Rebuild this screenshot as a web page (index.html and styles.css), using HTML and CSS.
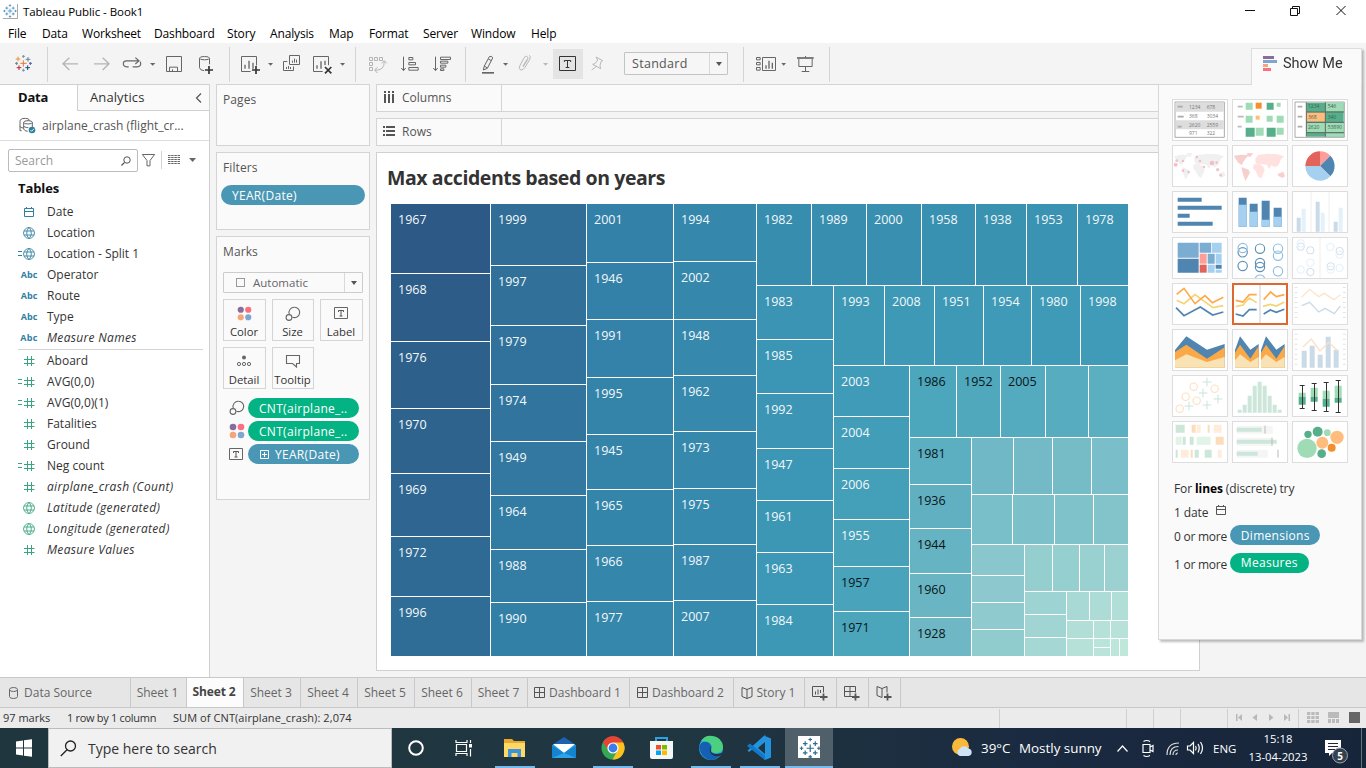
FILE: index.html
```html
<!DOCTYPE html>
<html lang="en">
<head>
<meta charset="utf-8">
<title>Tableau Public - Book1</title>
<link rel="stylesheet" href="styles.css">
</head>
<body>
<svg class="defs" width="0" height="0">
  <symbol id="cal" viewBox="0 0 12 12"><path d="M1.500 2.500h9v8h-9zM1.500 5.500h9M3.500 1v2M8.500 1v2" fill="none" stroke="currentColor"/></symbol>
  <symbol id="globe" viewBox="0 0 12 12"><path d="M6 .6a5.400 5.400 0 1 0 .01 0zM1 4h10M1 8h10M6 .6c-3 3-3 8 0 10.800M6 .6c3 3 3 8 0 10.800" fill="none" stroke="currentColor" stroke-width=".9"/></symbol>
  <symbol id="hash" viewBox="0 0 12 12"><path d="M4.500 1v10M8.500 1v10M1 4.500h10.500M1 8.500h10.500" fill="none" stroke="currentColor"/></symbol>
  <symbol id="size" viewBox="0 0 16 16"><path d="M9.500 1.200a5.200 5.200 0 1 1-2 10" fill="none" stroke="#666" stroke-width="1.100"/><path d="M9.500 1.200a5.200 5.200 0 0 0-5.200 6.800" fill="none" stroke="#666" stroke-width="1.100"/><circle cx="4" cy="11.500" r="2.900" fill="none" stroke="#666" stroke-width="1.100"/></symbol>
  <symbol id="dots" viewBox="0 0 16 16"><circle cx="4" cy="4" r="3.300" fill="#8a6d9b"/><circle cx="12" cy="4" r="3.300" fill="#fb6f80"/><circle cx="4" cy="12" r="3.300" fill="#f4a57a"/><circle cx="12" cy="12" r="3.300" fill="#7fa6d0"/></symbol>
  <symbol id="tee" viewBox="0 0 14 14"><path d="M.5 1.500h13v11h-13z" fill="none" stroke="#666"/><path d="M4.500 6v-1.500h5v1.500M7 4.500v5.500M5.500 10h3" fill="none" stroke="#555"/></symbol>
  <symbol id="spark" viewBox="0 0 48 48"><path d="M24 16v16M16 24h16M13 9v10M8 14h10M35 9v10M30 14h10M13 29v10M8 34h10M35 29v10M30 34h10M24 1v8M20 5h8M24 39v8M20 43h8M5 20v8M1 24h8M43 20v8M39 24h8" fill="none" stroke="currentColor" stroke-width="2.600"/></symbol>
</svg>

<header class="titlebar">
  <svg class="app-icon" width="15" height="15" viewBox="0 0 48 48"><use href="#spark"/></svg>
  <span class="app-title">Tableau Public - Book1</span>
  <svg class="winbtns" width="108" height="21" viewBox="0 0 108 21" fill="none" stroke="#111"><path d="M4 9.500h10M49.500 7.500h7v7h-7zM51.500 7.500v-2h7v7h-2M95.500 5l9 9M104.500 5l-9 9"/></svg>
</header>
<nav class="menu">
  <span style="width:34px">File</span><span style="width:40px">Data</span><span style="width:72px">Worksheet</span><span style="width:73px">Dashboard</span><span style="width:43px">Story</span><span style="width:59px">Analysis</span><span style="width:40px">Map</span><span style="width:54px">Format</span><span style="width:48px">Server</span><span style="width:60px">Window</span><span>Help</span>
</nav>

<div class="toolbar">
  <svg width="160" height="41" viewBox="0 129 480 123" fill="none" stroke="#666" stroke-width="3">
    <g stroke-width="3"><path d="M70 181v19M61 190h19" stroke="#e8762d"/><path d="M54 170v14M47 177h14" stroke="#eb912c"/><path d="M84 171v14M77 178h14" stroke="#59879b"/><path d="M57 196v14M50 203h14" stroke="#c72035"/><path d="M83 196v14M76 203h14" stroke="#1f457e"/><path d="M70 165v9M66 169h9" stroke="#7199a6"/><path d="M70 206v9M66 211h9" stroke="#7199a6"/><path d="M45 190h9M50 186v9" stroke="#5b879b"/><path d="M87 190h9M91 186v9" stroke="#5b6591"/></g>
    <path d="M142.500 141v105" stroke="#d4d4d4"/>
    <path d="M234 191.500h-44M208 173l-19 18.500 19 18.500M282 191.500h44M308 173l19 18.500-19 18.500" stroke="#b4b4b4" stroke-width="4"/>
    <path d="M386 200.500h-6q-10-1-10-9.500 0-8.500 10-8.500h36M398 200.500h14q10-1 10-9.500 0-4-2-6M406 173l11 9.500-11 9.500" stroke-width="3.500"/>
    <path d="M450 189h16l-8 8z" fill="#666" stroke="none"/>
  </svg>
  <svg width="197" height="41" viewBox="480 129 591 123" fill="none" stroke="#666" stroke-width="3">
    <path d="M499.500 169.500h45v45h-45zM508.500 214v-12.500h24v12.500M517.500 214v-6"/>
    <path d="M598.500 175v28q1 8 14 9M628.500 175v18"/><ellipse cx="613.500" cy="174.500" rx="15" ry="5"/><path d="M627 198v24M615 210h24" stroke="#333" stroke-width="5"/>
    <path d="M688.500 141v105M1066.500 141v105" stroke="#d4d4d4"/>
    <path d="M752 214.500h-27.500v-45h45v27"/><path d="M735 206v-12M747 206v-24M759 206v-18" stroke-width="4"/><path d="M768 198v24M756 210h24" stroke="#333" stroke-width="5"/>
    <path d="M804 189h15l-7 8zM1020 189h15l-7 8z" fill="#666" stroke="none"/>
    <path d="M868.500 166.500h30v27h-30zM862 184.500h-11.500v27h30v-12"/><path d="M877.500 188v-6M883.500 188v-12M889.500 188v-9M859.500 207v-6M865.500 207v-9M871.500 207v-6"/>
    <path d="M968 214.500h-27.500v-45h45v26"/><path d="M951 206v-10M963 206v-22M975 195v-13" stroke-width="4"/><path d="M975 201l19 19M994 201l-19 19" stroke="#333" stroke-width="5"/>
  </svg>
  <svg width="112" height="41" viewBox="1071 129 336 123" fill="none" stroke="#666" stroke-width="3">
    <g stroke="#b4b4b4"><path d="M1108.500 172.500h9v9h-9zM1123.500 172.500h9v9h-9zM1138.500 172.500h9v9h-9zM1108.500 187.500h9v9h-9zM1108.500 202.500h9v9h-9zM1125 210.500q28 2 28-26M1132 202l-8 8 8 9M1145 190l8-8 7 8"/></g>
    <path d="M1210.500 170v41M1204 204l6.500 8 6.500-8M1226.500 172.500h12v7h-12zM1226.500 187.500h20v7h-20zM1226.500 202.500h28v8h-28z"/>
    <path d="M1306.500 170v41M1300 204l6.500 8 6.500-8M1321.500 171.500h30v7h-30zM1321.500 183.500h22v6h-22zM1321.500 195.500h16v6h-16zM1321.500 206.500h10v5h-10z"/>
    <path d="M1396.500 141v105" stroke="#d4d4d4"/>
  </svg>
  <svg width="84" height="41" viewBox="147 9 252 123" fill="none" stroke="#666" stroke-width="3">
    <path d="M193 78l15-28q8-4 10 4l-16 31-12 5zM193 78l9 6M205 57l9 5"/><path d="M186 98.500h36" stroke-width="5"/><path d="M249 69h15l-7 8z" fill="#666" stroke="none"/>
    <path d="M309 81l14-22q3-9-3-10-5-1-8 5l-12 22q-5 12 3 14 6 1 12-8l14-23q5-12-2-13M321 58l-12 20" stroke="#b8b8b8"/><path d="M369 69h15l-7 8z" fill="#b8b8b8" stroke="none"/>
  </svg>
  <span class="tool-active"><svg width="30" height="30" viewBox="399 27 90 90" fill="none" stroke="#333" stroke-width="3"><path d="M418.500 49.500h48v42h-48z"/><path d="M433 66v-4.500h19v4.500M442.500 61v22M437 82.500h11"/></svg></span>
  <svg width="41" height="41" viewBox="489 9 123 123" fill="none" stroke="#b8b8b8" stroke-width="3"><path d="M528 51l20 11-5 3-3 12 2 9-24-13 7-2 8-11zM529 79l-14 11"/></svg>
  <div class="select">Standard<i></i></div>
  <svg width="110" height="41" viewBox="924 9 330 123" fill="none" stroke="#666" stroke-width="3"><path d="M970.500 21v105M1228.500 21v105" stroke="#d4d4d4"/><path d="M1009.500 52.500h11v7h-11zM1009.500 67.500h11v7h-11zM1009.500 82.500h11v8h-11zM1027.500 52.500h39v39h-39z"/><path d="M1038 86v-10M1047 86v-24M1057 86v-18" stroke-width="4"/><path d="M1084 69h14l-7 8z" fill="#666" stroke="none"/><path d="M1131 54h50" stroke-width="5"/><path d="M1136.500 57v22.500h40v-22.500M1156.500 48v4M1156.500 80v15M1145 94.500h23"/></svg>
</div>

<main class="workspace">
  <aside class="pane">
    <div class="pane-tabs"><b class="tab-data">Data</b><span class="tab-an">Analytics<svg width="7" height="10" viewBox="0 0 7 10"><path d="M6 .5l-4.500 4.500 4.500 4.500" fill="none" stroke="#555" stroke-width="1.200"/></svg></span></div>
    <div class="ds"><svg width="18" height="18" viewBox="58 97 54 54" fill="none" stroke="#666" stroke-width="3"><path d="M66 138h-5v-31M70 130q-9-1-9-5M61 107q5-7 16-6 12 0 12 6"/><ellipse cx="85" cy="113" rx="13" ry="5"/><path d="M72 113v20q2 6 12 7M98 113v14M72 125q8 5 14 4"/><circle cx="97" cy="136" r="10" fill="#31809f" stroke="none"/><path d="M92 136l4 4 7-8" stroke="#fff" stroke-width="2.500"/></svg><span>airplane_crash (flight_cr...</span></div>
    <div class="search-row">
      <div class="search"><span>Search</span><svg width="10" height="10" viewBox="0 0 10 10" fill="none" stroke="#555"><circle cx="6" cy="4" r="3.200"/><path d="M3.600 6.400L.5 9.500" stroke-width="1.300"/></svg></div>
      <svg width="61" height="22" viewBox="414 195 183 66" fill="none" stroke="#666" stroke-width="3"><path d="M427 211.500h37l-14 18v16h-9v-16z"/><path d="M484.500 201v54" stroke="#d4d4d4"/><path d="M504 214.500h36M504 220.500h36M504 226.500h36M504 232.500h36M504 238.500h36" stroke-dasharray="7.500 2"/><path d="M567 222h21l-10 12z" fill="#666" stroke="none"/></svg>
    </div>
    <h2 class="tables">Tables</h2>
    <ul class="fields dim">
      <li><i><svg><use href="#cal"/></svg></i>Date</li>
      <li><i><svg><use href="#globe"/></svg></i>Location</li>
      <li><i class="calc"><svg><use href="#globe"/></svg></i>Location - Split 1</li>
      <li><i class="abc">Abc</i>Operator</li>
      <li><i class="abc">Abc</i>Route</li>
      <li><i class="abc">Abc</i>Type</li>
      <li class="it"><i class="abc">Abc</i>Measure Names</li>
    </ul>
    <ul class="fields mea">
      <li><i><svg><use href="#hash"/></svg></i>Aboard</li>
      <li><i class="calc"><svg><use href="#hash"/></svg></i>AVG(0,0)</li>
      <li><i class="calc"><svg><use href="#hash"/></svg></i>AVG(0,0)(1)</li>
      <li><i><svg><use href="#hash"/></svg></i>Fatalities</li>
      <li><i><svg><use href="#hash"/></svg></i>Ground</li>
      <li><i class="calc"><svg><use href="#hash"/></svg></i>Neg count</li>
      <li class="it"><i><svg><use href="#hash"/></svg></i>airplane_crash (Count)</li>
      <li class="it"><i><svg><use href="#globe"/></svg></i>Latitude (generated)</li>
      <li class="it"><i><svg><use href="#globe"/></svg></i>Longitude (generated)</li>
      <li class="it"><i><svg><use href="#hash"/></svg></i>Measure Values</li>
    </ul>
  </aside>

  <section class="cards">
    <div class="card pages"><h3>Pages</h3></div>
    <div class="card filters"><h3>Filters</h3><span class="pill blue wide">YEAR(Date)</span></div>
    <div class="card marks"><h3>Marks</h3>
      <div class="marktype"><em></em>Automatic<i></i></div>
      <div class="btns">
        <div><svg width="15" height="15" viewBox="0 0 16 16"><use href="#dots"/></svg>Color</div>
        <div><svg width="16" height="16"><use href="#size"/></svg>Size</div>
        <div><svg width="14" height="14"><use href="#tee"/></svg>Label</div>
        <div><svg width="16" height="14" viewBox="0 0 16 14"><circle cx="8" cy="3.500" r="2" fill="#666"/><g fill="none" stroke="#666"><circle cx="3" cy="10" r="1.600"/><circle cx="8" cy="10" r="1.600"/><circle cx="13" cy="10" r="1.600"/></g></svg>Detail</div>
        <div><svg width="16" height="14" viewBox="0 0 16 14"><path d="M1.500 1.500h13v8h-3v3.500l-4-3.500h-6z" fill="none" stroke="#666" stroke-width="1.100"/></svg>Tooltip</div>
      </div>
      <div class="enc"><svg width="16" height="16"><use href="#size"/></svg><span class="pill green">CNT(airplane_..</span></div>
      <div class="enc"><svg width="16" height="16"><use href="#dots"/></svg><span class="pill green">CNT(airplane_..</span></div>
      <div class="enc"><svg width="14" height="14"><use href="#tee"/></svg><span class="pill blue"><svg width="9" height="9" viewBox="0 0 9 9"><path d="M.5 .5h8v8h-8zM4.500 2v5M2 4.500h5" fill="none" stroke="#fff"/></svg>YEAR(Date)</span></div>
    </div>
  </section>

  <section class="view-col">
    <div class="shelf"><span><svg width="12" height="12" viewBox="0 0 12 12" fill="#555"><path d="M1 0h2v2h-2zM5 0h2v2h-2zM9 0h2v2h-2zM1 3h2v9h-2zM5 3h2v9h-2zM9 3h2v9h-2z"/></svg>Columns</span></div>
    <div class="shelf"><span><svg width="12" height="10" viewBox="0 0 12 10" fill="#555"><path d="M0 0h2v2h-2zM0 4h2v2h-2zM0 8h2v2h-2zM3 0h9v2h-9zM3 4h9v2h-9zM3 8h9v2h-9z"/></svg>Rows</span></div>
    <div class="view"><h1>Max accidents based on years</h1><svg id="treemap" width="738" height="453" viewBox="391 204 738 453"></svg></div>
  </section>

  <aside class="showme">
    <div class="sm-tab"><svg width="15" height="16" viewBox="0 0 15 16"><path d="M0 0h11v3h-11z" fill="#8a6d9b"/><path d="M0 4h14v3h-14z" fill="#7fa6d0"/><path d="M0 8h5v3h-5z" fill="#f4a57a"/><path d="M0 12h8v3h-8z" fill="#fb6f80"/></svg>Show Me</div>
    <div class="sm-body">
    <div class="grid">
      <svg viewBox="0 0 168 126"><path d="M9 9h148v106h-148z" fill="#fff" stroke="#aaa" stroke-width="3"/><path d="M11 11h144v27h-144zM11 64h144v27h-144z" fill="#ddd"/><path d="M17 23h15M17 53h18M17 83h12" stroke="#aaa" stroke-width="5"/><g class="tiny"><text x="51" y="29">1234</text><text x="104" y="29">678</text><text x="51" y="57">368</text><text x="104" y="57">3034</text><text x="51" y="84">2620</text><text x="104" y="84">2559</text><text x="51" y="108">971</text><text x="104" y="108">322</text></g></svg>
      <svg viewBox="0 0 168 126"><path d="M17 23h15M17 53h18M17 83h12" stroke="#bbb" stroke-width="5"/><path d="M41 11h21v21h-21zM134 11h12v12h-12zM41 50h21v21h-21zM104 50h18v18h-18zM134 50h21v21h-21zM71 86h24v24h-24zM134 86h21v21h-21z" fill="#9fdbb5"/><path d="M104 11h21v21h-21zM41 86h27v27h-27zM104 86h27v27h-27z" fill="#57ae8a"/><path d="M71 11h18v18h-18z" fill="#f78f2e"/><path d="M71 50h12v12h-12z" fill="#ffbd7d"/></svg>
      <svg viewBox="0 0 168 126"><path d="M9 9h148v106h-148z" fill="#fff" stroke="#aaa" stroke-width="3"/><path d="M44 11h111v102h-111z" fill="#57ae8a"/><path d="M101 11h54v26h-54zM44 72h111v28h-111zM101 103h54v10h-54z" fill="#9fdbb5"/><path d="M44 40h56v28h-56z" fill="#ffbd7d"/><path d="M43 10v103M100 10v103M43 39h113M43 70h113M43 101h113" stroke="#666" stroke-width="3"/><path d="M17 23h14M17 53h14M17 83h14" stroke="#aaa" stroke-width="5"/><g class="tiny deep"><text x="48" y="28">1234</text><text x="107" y="28">546</text><text x="48" y="59">368</text><text x="107" y="59">340</text><text x="48" y="89">2620</text><text x="107" y="89">53890</text></g></svg>

      <svg viewBox="0 0 168 126"><path d="M6 34l20-5 24 1-8 10-9 12-3 9-11-8-10-14zM44 25l18-1-7 12-8-2zM31 66l18 8 4 9-12 21-9-22zM66 40l10-10 30-4 30 2 20 6-10 9-8 18-10 6-10-6-8 10-7-12-13-1-12-1-8-2zM65 58l18 0 12 8 3 10-10 22-9-4-8-16-8-8zM142 84l14-4 4 12-10 6-8-6z" fill="#f0f0f0"/><g fill="#efb0b8" opacity=".75"><circle cx="11" cy="59" r="6"/><circle cx="14" cy="47" r="4"/><circle cx="33" cy="77" r="4"/><circle cx="74" cy="36" r="4"/><circle cx="84" cy="48" r="4"/><circle cx="96" cy="66" r="4"/><circle cx="120" cy="54" r="7"/><circle cx="134" cy="53" r="4"/><circle cx="137" cy="74" r="5"/><circle cx="146" cy="91" r="4"/><circle cx="50" cy="81" r="4"/><circle cx="33" cy="48" r="4"/></g></svg>
      <svg viewBox="0 0 168 126"><path d="M6 32l20-3 24 1-8 10-9 12-3 9-11-8-10-14zM44 25l20-1-9 12-8-2zM28 66l22 8 4 9-14 25-8-24z" fill="#f7d0ce"/><path d="M70 42l8-12 28-4 30 2 20 6-9 9-8 18-10 6-10-6-8 10-7-12-13-1-12-1-8-2zM65 58l18 0 12 8 3 10-10 24-9-4-8-18-8-8z" fill="#ffe1e0"/><path d="M138 86l16-6 5 14-8 5-13-7z" fill="#f9cfcd"/></svg>
      <svg viewBox="0 0 168 126"><path d="M84 63v-44a44 44 0 0 1 31 13z" fill="#ff9d98"/><path d="M84 63l31-31a44 44 0 0 1 0 62z" fill="#4f85b0"/><path d="M84 63l31 31a44 44 0 0 1-75-31z" fill="#a6d0f0"/><path d="M84 63h-44a44 44 0 0 1 44-44z" fill="#e16359"/></svg>

      <svg viewBox="0 0 168 126"><path d="M17 20h72v12h-72zM17 44h132v12h-132zM17 68h36v12h-36zM17 92h105v12h-105z" fill="#4f85b0"/></svg>
      <svg viewBox="0 0 168 126"><path d="M20 20h24v87h-24zM53 38h24v69h-24zM89 29h24v78h-24zM125 50h24v57h-24z" fill="#4f85b0"/><path d="M20 41h24v66h-24zM53 62h24v45h-24zM89 86h24v21h-24zM125 77h24v30h-24z" fill="#a6d0f0"/></svg>
      <svg viewBox="0 0 168 126"><path d="M57 2v122M111 2v122" stroke="#eee" stroke-width="3"/><path d="M14 80h12v42h-12zM71 32h12v90h-12zM125 92h12v30h-12z" fill="#cbdae7"/><path d="M29 53h12v69h-12zM86 65h12v57h-12zM140 50h12v72h-12z" fill="#e3f1fb"/></svg>

      <svg viewBox="0 0 168 126"><path d="M17 17h63v45h-63zM83 17h34v30h-34zM107 50h21v30h-21z" fill="#7badd3"/><path d="M17 65h63v42h-63zM131 83h18v12h-18z" fill="#4f85b0"/><path d="M119 17h30v30h-30zM131 50h18v30h-18zM107 83h21v24h-21zM131 98h18v9h-18z" fill="#a6d0f0"/><path d="M83 50h21v30h-21z" fill="#ff9d98"/><path d="M83 83h21v24h-21z" fill="#e16359"/></svg>
      <svg viewBox="0 0 168 126" fill="none" stroke="#5e92b8" stroke-width="3.500"><circle cx="32" cy="46" r="14"/><circle cx="32" cy="87" r="14"/><circle cx="84" cy="35" r="14"/><circle cx="84" cy="78" r="14"/><circle cx="84" cy="90" r="14"/><g stroke="#8fbfe2"><circle cx="32" cy="33" r="14"/><circle cx="138" cy="35" r="14"/><circle cx="138" cy="56" r="14"/><circle cx="138" cy="103" r="14"/><path d="M70 124q3-10 14-10t14 10"/></g></svg>
      <svg viewBox="0 0 168 126" fill="none" stroke="#d0deea" stroke-width="3"><path d="M84 3v120" stroke="#eee"/><circle cx="26" cy="29" r="11"/><circle cx="55" cy="40" r="11"/><circle cx="143" cy="42" r="11"/><circle cx="55" cy="105" r="11"/><circle cx="116" cy="88" r="11"/><g stroke="#e3f1fb"><circle cx="26" cy="19" r="11"/><circle cx="115" cy="30" r="11"/><circle cx="143" cy="53" r="11"/><circle cx="55" cy="77" r="11"/><circle cx="26" cy="98" r="11"/><circle cx="143" cy="93" r="11"/><circle cx="116" cy="98" r="11"/></g></svg>

      <svg viewBox="0 0 168 126" fill="none" stroke-width="5"><path d="M14 52l22 10 33-27 54 39 31-6" stroke="#f5d378"/><path d="M14 34l22-18 33 46 30-24 22 21 33-16" stroke="#ffa94b"/><path d="M12 74l24 24 49-26 37 24 32-9" stroke="#4f85b0"/></svg>
      <svg class="sel" viewBox="0 0 168 126" fill="none" stroke-width="5"><path d="M84 3v120" stroke="#ccc" stroke-width="3"/><path d="M11 52l22 5 19-22h22M95 50l21-23 17 14 24-6" stroke="#ffa94b"/><path d="M11 71l22-5 19-21 22 14M93 70l22-6 18 5 24-12" stroke="#f5d378"/><path d="M11 93l22 6 19-19h22M95 93l20-12 18 7 24-9" stroke="#4f85b0"/></svg>
      <svg viewBox="0 0 168 126" fill="none" stroke-width="4"><path d="M29 43l24-24 27 22 17-10 29 19 19-15" stroke="#fde3cb"/><path d="M29 68l24-10 27 29 19-11 28 16 18-23" stroke="#cbdae7"/><path d="M12 12v100M157 12v100" stroke="#e4e4e4" stroke-width="9" stroke-dasharray="3 12"/></svg>

      <svg viewBox="0 0 168 126"><path d="M9 116v-53l34-41 62 40 53-17v71z" fill="#4f85b0"/><path d="M9 116v-47l34-22 62 42 53-34v61z" fill="#fba947"/><path d="M9 116v-22l34-18 62 23 53-15v32z" fill="#f9e2b3"/></svg>
      <svg viewBox="0 0 168 126"><path d="M9 116v-53l15-41 31 40 25-17v71zM87 116v-53l15-41 31 40 25-17v71z" fill="#4f85b0"/><path d="M9 116v-45l15-24 31 42 25-38v65zM87 116v-45l15-24 31 42 25-38v65z" fill="#fba947"/><path d="M9 116v-22l15-18 31 23 25-15v32zM87 116v-22l15-18 31 23 25-15v32z" fill="#f9e2b3"/></svg>
      <svg viewBox="0 0 168 126" fill="none"><path d="M29 65h15v51h-15zM53 50h15v66h-15zM77 77h15v39h-15zM101 23h15v93h-15zM125 62h15v54h-15z" fill="#cbdae7"/><path d="M33 54l25-24 26 36 26-26 27 25" stroke="#fde0c6" stroke-width="4"/><path d="M12 14v100M157 14v100" stroke="#e4e4e4" stroke-width="9" stroke-dasharray="3 12"/></svg>

      <svg viewBox="0 0 168 126" fill="none" stroke="#fee0c3" stroke-width="3.500"><circle cx="65" cy="35" r="11"/><circle cx="128" cy="41" r="11"/><circle cx="41" cy="65" r="11"/><circle cx="74" cy="77" r="11"/><circle cx="23" cy="101" r="11"/><path d="M92 21h26M105 8v26M80 54h26M93 41v26M125 72h26M138 59v26M92 90h26M105 77v26M38 93h26M51 80v26" stroke="#c9e5d9" stroke-width="3"/></svg>
      <svg viewBox="0 0 168 126"><path d="M17 104h12v9h-12zM32 89h12v24h-12zM47 62h12v51h-12zM62 32h12v81h-12zM77 20h12v93h-12zM92 32h12v81h-12zM107 62h12v51h-12zM122 89h12v24h-12zM137 104h12v9h-12z" fill="#cce6da"/></svg>
      <svg viewBox="0 0 168 126"><path d="M20 53h21v12h-21zM56 38h21v27h-21zM92 47h21v24h-21zM128 32h21v36h-21z" fill="#9fdbb5"/><path d="M20 65h21v24h-21zM56 65h21v15h-21zM92 71h21v24h-21zM128 68h21v15h-21z" fill="#57ae8a"/><path d="M23 31.500h15M31.500 30v70M23 100.500h15M59 25.500h15M67.500 24v81M59 106.500h15M95 22.500h15M103.500 21v87M95 109.500h15M131 16.500h15M139.500 15v96M131 112.500h15" fill="none" stroke="#333" stroke-width="3"/></svg>

      <svg viewBox="0 0 168 126"><path d="M11 11h27v24h-27zM32 47h9v24h-9zM53 47h12v24h-12zM11 86h6v24h-6zM68 86h12v24h-12zM98 86h21v24h-21z" fill="#cce6da"/><path d="M11 47h18v24h-18zM74 47h42v24h-42z" fill="#e2f3e8"/><path d="M59 11h12v24h-12zM107 11h6v24h-6zM131 47h24v24h-24zM56 86h6v24h-6z" fill="#fddcbc"/><path d="M74 11h12v24h-12zM125 11h24v24h-24zM26 86h24v24h-24zM137 86h12v24h-12z" fill="#ffecda"/></svg>
      <svg viewBox="0 0 168 126"><path d="M14 14h108v24h-108zM14 50h108v24h-108zM14 86h93v24h-93z" fill="#f5f5f5"/><path d="M14 20h75v12h-75zM14 56h120v12h-120zM14 92h63v12h-63z" fill="#cce6da"/><path d="M99 14v24M120 50v24M138 86v24" stroke="#bbb" stroke-width="3"/></svg>
      <svg viewBox="0 0 168 126"><circle cx="45" cy="82" r="29" fill="#9fdbb5"/><circle cx="106" cy="35" r="10" fill="#9fdbb5"/><circle cx="48" cy="40" r="11" fill="#57ae8a"/><circle cx="77" cy="32" r="15" fill="#57ae8a"/><circle cx="89" cy="98" r="13" fill="#57ae8a"/><circle cx="135" cy="49" r="20" fill="#ffbd7d"/><circle cx="91" cy="65" r="18" fill="#ffbd7d"/><circle cx="119" cy="80" r="12" fill="#f28e2b"/></svg>
    </div>
    <div class="hint"><p class="l1">For <b>lines</b> (discrete) try</p><p class="l2">1 date <svg width="12" height="12"><use href="#cal"/></svg></p><p class="l3">0 or more <span class="pill blue">Dimensions</span></p><p class="l4">1 or more <span class="pill green">Measures</span></p></div>
    </div>
  </aside>
</main>

<div class="sheets">
  <span class="src" style="width:131px"><svg width="9" height="12" viewBox="0 0 9 12" fill="none" stroke="#666"><path d="M.5 2.500q0-2 4-2t4 2v7q0 2-4 2t-4-2zM.5 2.500q0 2 4 2t4-2"/></svg>Data Source</span>
  <span style="width:56px">Sheet 1</span><span class="on" style="width:57px">Sheet 2</span><span style="width:57px">Sheet 3</span><span style="width:57px">Sheet 4</span><span style="width:57px">Sheet 5</span><span style="width:57px">Sheet 6</span><span style="width:56px">Sheet 7</span>
  <span style="width:102px"><svg width="11" height="11" viewBox="0 0 11 11"><path d="M.5 .5h10v10h-10zM5.500 .5v10M.5 5.500h10" fill="none" stroke="#555"/></svg>Dashboard 1</span>
  <span style="width:104px"><svg width="11" height="11" viewBox="0 0 11 11"><path d="M.5 .5h10v10h-10zM5.500 .5v10M.5 5.500h10" fill="none" stroke="#555"/></svg>Dashboard 2</span>
  <span style="width:71px"><svg width="12" height="12" viewBox="0 0 12 12"><path d="M6 2.500l-5-2v9l5 2 5-2v-9zM6 2.500v9" fill="none" stroke="#555"/></svg>Story 1</span>
  <span style="width:32px"><svg width="16" height="16" viewBox="0 0 16 16" fill="none" stroke="#555"><path d="M9 11.500h-8.500v-10h11v6M3.500 9.500v-3M6 9.500v-5M8.500 8v-3"/><path d="M11.500 8.500v7M8 12h7.500" stroke-width="1.800"/></svg></span>
  <span style="width:32px"><svg width="16" height="16" viewBox="0 0 16 16" fill="none" stroke="#555"><path d="M8 11.500h-7.500v-10h11v6M6 1.500v10M.5 6.500h11"/><path d="M11.500 8.500v7M8 12h7.500" stroke-width="1.800"/></svg></span>
  <span style="width:32px"><svg width="16" height="16" viewBox="0 0 16 16" fill="none" stroke="#555"><path d="M6 3.500l-5-2v9l5 2v-9l5-2v6"/><path d="M11.500 8.500v7M8 12h7.500" stroke-width="1.800"/></svg></span>
</div>
<div class="status">
  <span class="s1">97 marks</span><span class="s2">1 row by 1 column</span><span class="s3">SUM of CNT(airplane_crash): 2,074</span>
  <svg width="367" height="19" viewBox="999 709 367 19"><path d="M999.500 709v19M1126.500 709v19M1153.500 709v19M1180.500 709v19M1227.500 709v19M1298.500 709v19" stroke="#cfcfcf"/><path d="M1236 714h1.500v7h-1.500zM1242 714v7l-4-3.500zM1257 714v7l-4.500-3.500zM1269 714v7l4.500-3.500zM1284 714v7l4-3.500zM1288.500 714h1.500v7h-1.500z" fill="#b8b8b8"/><path d="M1307 713.500h12M1307 717.500h12M1307 721.500h12" stroke="#bbb" stroke-width="3" stroke-dasharray="3.300 1"/><path d="M1328 712h11v6h-11zM1328 719h3v4h-3zM1332 719h3v4h-3zM1336 719h3v4h-3z" fill="#bbb"/><path d="M1349 712h11v11h-11z" fill="#666"/></svg>
</div>

<footer class="taskbar">
  <svg width="48" height="40" viewBox="0 728 48 40"><path d="M16 741.500l7-1v7h-7zM24 740.300l8-1.100v8.300h-8zM16 748.500h7v7l-7-1zM24 748.500h8v8.300l-8-1.100z" fill="#fff"/></svg>
  <div class="tb-search"><svg width="17" height="17" viewBox="0 0 17 17" fill="none" stroke="#222" stroke-width="1.300"><circle cx="10.500" cy="6" r="5"/><path d="M7 9.800L.8 16"/></svg>Type here to search</div>
  <svg width="393" height="40" viewBox="392 728 393 40">
    <circle cx="416" cy="748" r="6.800" fill="none" stroke="#fff" stroke-width="2"/>
    <path d="M456 740v2.500h11v-2.500M456.500 744.500h10v7h-10zM456 756v-2.500h11v2.500M470.500 740v3M470.500 749v7.500" fill="none" stroke="#fff" stroke-width="1.200"/><path d="M469 744h3v3.500h-3z" fill="#fff"/>
    <path d="M495 766h40v2h-40zM593 766h40v2h-40zM691 766h40v2h-40zM740 766h40v2h-40z" fill="#76b9ed"/>
    <path d="M504 739h8l2 2h11v16h-21z" fill="#e8a92d"/><path d="M504 743h21v14h-21z" fill="#ffd866"/><path d="M508 757v-8h13v8h-3.500v-4h-6v4z" fill="#3d93dc"/>
    <path d="M552 745l12-8 12 8v13h-24z" fill="#1d62b0"/><path d="M552 745h24v13h-24z" fill="#2ba4e8"/><path d="M553 744h22l-11 9z" fill="#fff"/><path d="M552 745l12 8-12 5zM576 745l-12 8 12 5z" fill="#1583cf"/>
    <circle cx="613" cy="748" r="11.500" fill="#34a853"/><path d="M603 742a11.500 11.500 0 0 1 20 0l1.500 6h-11.500l-5 2z" fill="#ea4335"/><path d="M613 742.500h10.200a11.500 11.500 0 0 1-10.700 17l5-9z" fill="#fbc11c"/><circle cx="613" cy="748" r="5.600" fill="#fff"/><circle cx="613" cy="748" r="4.400" fill="#3b7ded"/>
    <path d="M656 742v-4h11v4" fill="none" stroke="#2aa2e6" stroke-width="2"/><path d="M650 741h23v16q0 2-2 2h-19q-2 0-2-2z" fill="#f4f6f8"/><path d="M656 745h5v4.500h-5z" fill="#f25022"/><path d="M662 745h5v4.500h-5z" fill="#7fba00"/><path d="M656 750.500h5v4.500h-5z" fill="#00a4ef"/><path d="M662 750.500h5v4.500h-5z" fill="#ffb900"/>
    <circle cx="711" cy="748" r="12" fill="#2aa5e0"/><path d="M701 741q4-6 11-5 10 1 11 11 0 6-8 6-5-1-3-5 0-7-11-7z" fill="#4bd07f"/><path d="M699 747q2-6 8-5 4 1 4 5-4 8 9 8-4 5-9 5-10-1-12-13z" fill="#1560b3"/><path d="M711.500 746q-3 7 4.500 8 4 0 7-2l-3 4q-8 1-10-4-1-4 1.500-6z" fill="#20343f"/>
    <path d="M765 736l6 2.500v19l-6 2.500-12-11-4 3-1.500-1.500 18-16z" fill="#2493df"/><path d="M748 745l2-1.500 15 12v4.500l-18-14z" fill="#1478c8"/><path d="M765 742v12l-7-6z" fill="#20343f"/>
  </svg>
  <div class="tb-app"><svg width="22" height="22" viewBox="-3 -3 54 54"><use href="#spark"/></svg></div>
  <svg class="weather" width="22" height="22" viewBox="0 0 22 22"><circle cx="9.500" cy="9.500" r="8.500" fill="#fbb93b"/><path d="M9 19a4 4 0 0 1 0-7.500 5 5 0 0 1 8.500 0 3.800 3.800 0 0 1 0 7.500z" fill="#cfe3f7"/></svg>
  <span class="temp">39°C</span><span class="cond">Mostly sunny</span>
  <svg width="92" height="40" viewBox="1114 728 92 40" fill="none" stroke="#fff" stroke-width="1.200"><path d="M1117.500 751.500l5-5.500 5 5.500M1143 744.500h7v8h-7zM1150 747l3-1.500v6l-3-1.500M1143.500 741.500q3-2 6.500 0M1143.500 755.500q3 2 6.500 0"/><path d="M1167 755q0-12 12-12M1170 755q0-8.500 8.500-8.500M1173 755q0-5 5-5M1176 755q0-2 2-2" stroke="#ddd"/><path d="M1187.500 746h2.500l3.500-3.500v11l-3.500-3.500h-2.500zM1195.500 746q1.500 2 0 4.500M1198 744q2.500 4 0 8.500M1200.500 742q4 6 0 12"/></svg>
  <span class="eng">ENG</span>
  <div class="clock"><span>15:18</span><span>13-04-2023</span></div>
  <svg class="notif" width="46" height="40" viewBox="1320 728 46 40"><path d="M1325 740h16v13h-9l-3 3v-3h-4z" fill="#fff"/><path d="M1328 743.500h10M1328 746.500h10M1328 749.500h7" stroke="#1b2b3e"/><circle cx="1340" cy="755.500" r="7.500" fill="#35414d" stroke="#9aa3aa"/><text x="1340" y="759.500">5</text><path d="M1361.500 728v40" stroke="#66727e"/></svg>
</footer>
<script src="treemap.js"></script>
</body>
</html>
```
FILE: styles.css
```css
* { box-sizing: border-box; margin: 0; padding: 0; }
body { width: 1366px; height: 768px; overflow: hidden; display: flex; flex-direction: column; background: #f4f4f4; font-family: "Open Sans", sans-serif; font-size: 12px; color: #333; white-space: nowrap; }
svg { display: block; flex: none; }
.defs { position: absolute; }
ul { list-style: none; }
i, em { font-style: normal; }

.titlebar { height: 23px; flex: none; background: #fff; display: flex; align-items: center; padding-left: 3px; color: #000; }
.app-icon { color: #3b87b5; border-right: 1px solid #aaa; border-bottom: 1px solid #aaa; }
.app-title { margin-left: 5px; font-size: 11.500px; letter-spacing: -.05px; }
.winbtns { margin-left: auto; margin-right: 17px; }
.menu { height: 20px; flex: none; background: #fff; display: flex; align-items: center; padding-left: 8px; color: #000; font-size: 12px; letter-spacing: -.15px; }
.toolbar { height: 41px; flex: none; display: flex; }
.tool-active { width: 30px; height: 30px; margin-top: 6px; background: #e4e4e4; }
.select { width: 104px; height: 23px; margin-top: 9px; border: 1px solid #c3c3c3; border-radius: 1px; background: #f6f6f6; padding-left: 7px; line-height: 21px; font-size: 12.500px; letter-spacing: .3px; color: #555; display: flex; justify-content: space-between; }
.select i, .marktype i { width: 18px; border-left: 1px solid #d9d9d9; display: flex; align-items: center; justify-content: center; }
.select i::after, .marktype i::after { content: ""; border: 3.500px solid transparent; border-top: 4px solid #555; border-bottom: 0; }

.workspace { height: 593px; flex: none; display: flex; position: relative; }
.pane { width: 210px; height: 593px; background: #fff; border-right: 1px solid #d0d0d0; border-top: 1px solid #d0d0d0; }
.pane-tabs { display: flex; height: 26px; line-height: 25px; }
.tab-data { width: 77px; padding-left: 18px; font-size: 13px; letter-spacing: -.2px; color: #111; }
.tab-an { flex: 1; border-left: 1px solid #d0d0d0; border-bottom: 1px solid #d0d0d0; background: #fafafa; padding: 0 7px 0 12px; font-size: 13px; letter-spacing: .1px; display: flex; align-items: center; justify-content: space-between; }
.ds { height: 30px; border-bottom: 1px solid #ddd; display: flex; align-items: center; padding-left: 19px; gap: 5px; color: #555; }
.search-row { display: flex; padding: 8px 0 0 8px; height: 32px; }
.search { width: 130px; height: 23px; border: 1px solid #bbb; border-radius: 2px; display: flex; align-items: center; justify-content: space-between; padding: 0 6px; color: #999; }
.tables { font-size: 13px; line-height: 20px; height: 28px; padding: 5px 0 0 18px; letter-spacing: -.1px; color: #111; }
.fields li { height: 21px; line-height: 21px; display: flex; align-items: center; }
.fields i { width: 19px; height: 12px; margin: 0 10px 0 18px; display: flex; align-items: center; justify-content: flex-end; }
.fields i svg { width: 12px; height: 12px; margin-right: 2px; }
.fields i.calc::before { content: ""; width: 4px; height: 3px; border-top: 1px solid currentColor; border-bottom: 1px solid currentColor; margin-right: 1px; }
.fields i.abc { font: 700 9px "Open Sans", sans-serif; justify-content: center; padding-left: 3px; }
.dim { border-bottom: 1px solid #d4d4d4; height: 149px; margin: 0 6px 0 18px; }
.dim li { margin-left: -18px; }
.dim i { color: #31809f; }
.mea i { color: #38a580; }
.it { font-style: italic; letter-spacing: .32px; }

.cards { width: 154px; margin-left: 6px; display: flex; flex-direction: column; gap: 6px; }
.card { border: 1px solid #d4d4d4; background: #fafafa; }
.card h3 { font-weight: 400; font-size: 12px; line-height: 16px; padding: 7px 0 0 6px; color: #555; letter-spacing: .1px; }
.pages { height: 62px; } .filters { height: 78px; } .marks { height: 264px; }
.pill { height: 20px; line-height: 19px; border-radius: 10px; color: #fff; font-size: 12px; font-weight: 500; letter-spacing: .3px; padding-left: 11px; display: inline-flex; align-items: center; }
.blue { background: #4a97b5; } .green { background: #04b383; }
.wide { width: 144px; margin: 9px 0 0 4px; display: flex; }
.marktype { margin: 12px 0 0 6px; width: 140px; height: 21px; border: 1px solid #ccc; border-radius: 1px; display: flex; align-items: center; color: #666; font-size: 11.500px; }
.marktype em { width: 9px; height: 9px; border: 1px solid #999; margin: 0 8px 0 12px; }
.marktype i { margin-left: auto; height: 19px; }
.btns { display: grid; grid-template-columns: 43px 42px 43px; gap: 6px; padding: 6px 0 0 6px; }
.btns div { height: 42px; border: 1px solid #d4d4d4; display: flex; flex-direction: column; align-items: center; justify-content: space-between; padding: 6px 1px 1px 0; font-size: 11.300px; line-height: 15px; }
.enc { display: flex; align-items: center; margin: 3px 0 0 12px; height: 20px; }
.btns + .enc { margin-top: 9px; }
.enc svg { margin-right: auto; }
.enc .pill { width: 111px; margin-right: 10px; }
.enc .pill svg { margin: 0 6px 0 1px; }

.view-col { width: 824px; margin-left: 6px; display: flex; flex-direction: column; gap: 6px; }
.shelf { height: 28px; border: 1px solid #d4d4d4; background: #fafafa; display: flex; }
.shelf span { width: 125px; border-right: 1px solid #d4d4d4; display: flex; align-items: center; gap: 7px; padding: 0 0 2px 6px; color: #555; }
.view { height: 519px; background: #fff; border: 1px solid #d0d0d0; padding: 11px 0 0 14px; }
.view h1 { font-size: 19.500px; font-weight: 700; letter-spacing: -.42px; line-height: 28px; height: 40px; margin-left: -4px; color: #333; }
#treemap text { font-size: 12.500px; }

.showme { position: absolute; left: 1158px; top: -36px; width: 204px; filter: drop-shadow(2px 2px 1px rgba(0,0,0,.25)); }
.sm-tab { position: relative; width: 111px; height: 37px; margin-left: auto; background: #fafafa; border: 1px solid #ddd; border-bottom: 0; display: flex; align-items: center; padding: 0 0 7px 11px; gap: 5px; font: 14.500px Roboto, sans-serif; color: #333; z-index: 1; }
.sm-body { height: 556px; margin-top: -1px; background: #fafafa; border: 1px solid #d8d8d8; padding: 14px 0 0 13px; }
.grid { display: grid; grid-template-columns: repeat(3, 56px); gap: 4px; }
.grid svg { width: 56px; height: 42px; background: #fff; outline: 1px solid #ddd; outline-offset: -1px; }
.grid .sel { outline: 2px solid #dc6932; outline-offset: -2px; }
.tiny { font-size: 15px; fill: #777; }
.deep { fill: #3d6353; }
.hint { padding: 13px 0 0 2px; color: #333; letter-spacing: -.1px; }
.hint p { display: flex; align-items: center; white-space: pre; }
.hint b { color: #000; }
.l1, .l2 { height: 24px; } .l2 svg { margin: -5px 0 0 4px; color: #555; }
.l3 { height: 25px; letter-spacing: -.25px; } .l4 { height: 30px; letter-spacing: -.25px; }
.hint .pill { margin: -3px 0 0 0; width: 90px; letter-spacing: .3px; }
.hint .green { width: 79px; }

.sheets { height: 31px; flex: none; background: #e6e6e6; border-top: 1px solid #c8c8c8; border-bottom: 1px solid #c8c8c8; display: flex; color: #666; }
.sheets span { border-right: 1px solid #c8c8c8; display: flex; align-items: center; justify-content: center; gap: 4px; flex: none; padding-right: 2px; }
.sheets .src { justify-content: flex-start; padding-left: 9px; gap: 6px; }
.sheets .on { background: #fcfcfc; font-weight: 700; color: #444; letter-spacing: -.15px; padding-bottom: 2px; }
.status { height: 20px; flex: none; background: #ebebeb; display: flex; align-items: center; padding-left: 3px; font-size: 11px; line-height: 15px; }
.status span { padding-bottom: 2px; }
.s1 { width: 64px; } .s2 { width: 106px; letter-spacing: -.3px; } .s3 { letter-spacing: .08px; } .status svg { margin-left: auto; }

.taskbar { height: 40px; flex: none; background: linear-gradient(90deg, #20363f, #203640 50%, #1a2a40 75%, #17253a); color: #fff; display: flex; align-items: center; font-size: 13.400px; }
.tb-search { width: 344px; height: 40px; background: #f1f1f1; border: 1px solid #bbb; color: #333; font-size: 14px; display: flex; align-items: center; padding-left: 11px; gap: 11px; }
.tb-app { width: 48px; height: 40px; background: #4f606a; border-bottom: 2px solid #76b9ed; display: flex; align-items: center; justify-content: center; }
.tb-app svg { background: #fff; color: #2f6b8f; }
.weather { margin-left: 118px; }
.temp { width: 38px; margin-left: 8px; } .cond { width: 95px; }
.eng { width: 36px; margin-left: 7px; font-size: 11.500px; }
.clock { width: 58px; display: flex; flex-direction: column; align-items: center; font-size: 11.300px; line-height: 18px; }
.notif { margin-left: auto; }
.notif text { font-size: 10px; font-weight: 700; text-anchor: middle; fill: #fff; }
```
FILE: treemap.js
```javascript
// Each strip: direction, fixed-axis start and end, running start, cells as [end, label], first and last colour.
const strips = [
  ['v', 391, 490, 204, [[273, 1967], [341, 1968], [408, 1976], [473, 1970], [536, 1969], [596, 1972], [656, 1996]], '#2c5985', '#2f6d97'],
  ['v', 491, 586, 204, [[265, 1999], [325, 1997], [384, 1979], [441, 1974], [495, 1949], [549, 1964], [602, 1988], [656, 1990]], '#306d97', '#3380a7'],
  ['v', 587, 673, 204, [[262, 2001], [319, 1946], [377, 1991], [434, 1995], [489, 1945], [545, 1965], [601, 1966], [656, 1977]], '#3380a8', '#3587ab'],
  ['v', 674, 756, 204, [[261, 1994], [319, 2002], [375, 1948], [431, 1962], [488, 1973], [544, 1975], [600, 1987], [656, 2007]], '#3587ab', '#378bae'],
  ['h', 204, 285, 757, [[811, 1982], [866, 1989], [921, 2000], [975, 1958], [1026, 1938], [1077, 1953], [1128, 1978]], '#378dae', '#3b94b3'],
  ['v', 757, 833, 286, [[339, 1983], [393, 1985], [448, 1992], [500, 1947], [552, 1961], [604, 1963], [656, 1984]], '#3b94b3', '#3d98b6'],
  ['h', 286, 365, 834, [[884, 1993], [934, 2008], [983, 1951], [1031, 1954], [1080, 1980], [1128, 1998]], '#3d98b6', '#3f9bb7'],
  ['v', 834, 909, 366, [[416, 2003], [468, 2004], [519, 2006], [566, 1955], [611, 1957], [656, 1971]], '#3f9bb7', '#4ba5bb'],
  ['h', 366, 437, 910, [[956, 1986], [1000, 1952], [1045, 2005], [1088], [1128]], '#4ca6bc', '#5caec1'],
  ['v', 910, 971, 438, [[484, 1981], [528, 1936], [573, 1944], [617, 1960], [656, 1928]], '#5caec1', '#6fb7c4'],
  ['h', 438, 494, 972, [[1013], [1052], [1091], [1128]], '#70b8c5', '#79bec8'],
  ['h', 495, 544, 972, [[1012], [1054], [1093], [1128]], '#79bfc9', '#83c4cb'],
  ['v', 972, 1024, 545, [[575], [602], [629], [656]], '#8ac7cd', '#90cbce'],
  ['h', 545, 591, 1025, [[1052], [1079], [1104], [1128]], '#94cecf', '#9bd1d1'],
  ['v', 1025, 1066, 592, [[614], [637], [656]], '#9dd3d2', '#a5d7d4'],
  ['h', 592, 620, 1067, [[1089], [1111], [1128]], '#a8d9d5', '#b1dfd8'],
  ['h', 621, 638, 1067, [[1093], [1110], [1128]], '#b1dfd8', '#b8e2d9'],
  ['v', 1067, 1093, 639, [[656]], '#b5e1d9', '#b5e1d9'],
  ['v', 1094, 1110, 639, [[647], [656]], '#b9e4da', '#bae4da'],
  ['h', 639, 656, 1111, [[1119], [1128]], '#bce6da', '#bfe7da']
];
const darkText = new Set([1957, 1971, 1986, 1952, 2005, 1981, 1936, 1944, 1960, 1928]);
const rgb = hex => [1, 3, 5].map(i => parseInt(hex.substr(i, 2), 16));
const mix = (a, b, t) => `rgb(${rgb(a).map((v, i) => Math.round(v + (rgb(b)[i] - v) * t)).join()})`;
let out = '';
for (const [dir, a, b, start, cells, from, to] of strips) {
  let pos = start;
  cells.forEach(([end, label], i) => {
    const [x, y, w, h] = dir === 'v' ? [a, pos, b - a, end - pos] : [pos, a, end - pos, b - a];
    out += `<rect x="${x}" y="${y}" width="${w}" height="${h}" fill="${mix(from, to, cells.length > 1 ? i / (cells.length - 1) : 0)}"/>`;
    if (label) out += `<text x="${x + 7}" y="${y + 20}" fill="${darkText.has(label) ? '#08151a' : '#f4f8fa'}">${label}</text>`;
    pos = end + 1;
  });
}
document.getElementById('treemap').innerHTML = out;
```
